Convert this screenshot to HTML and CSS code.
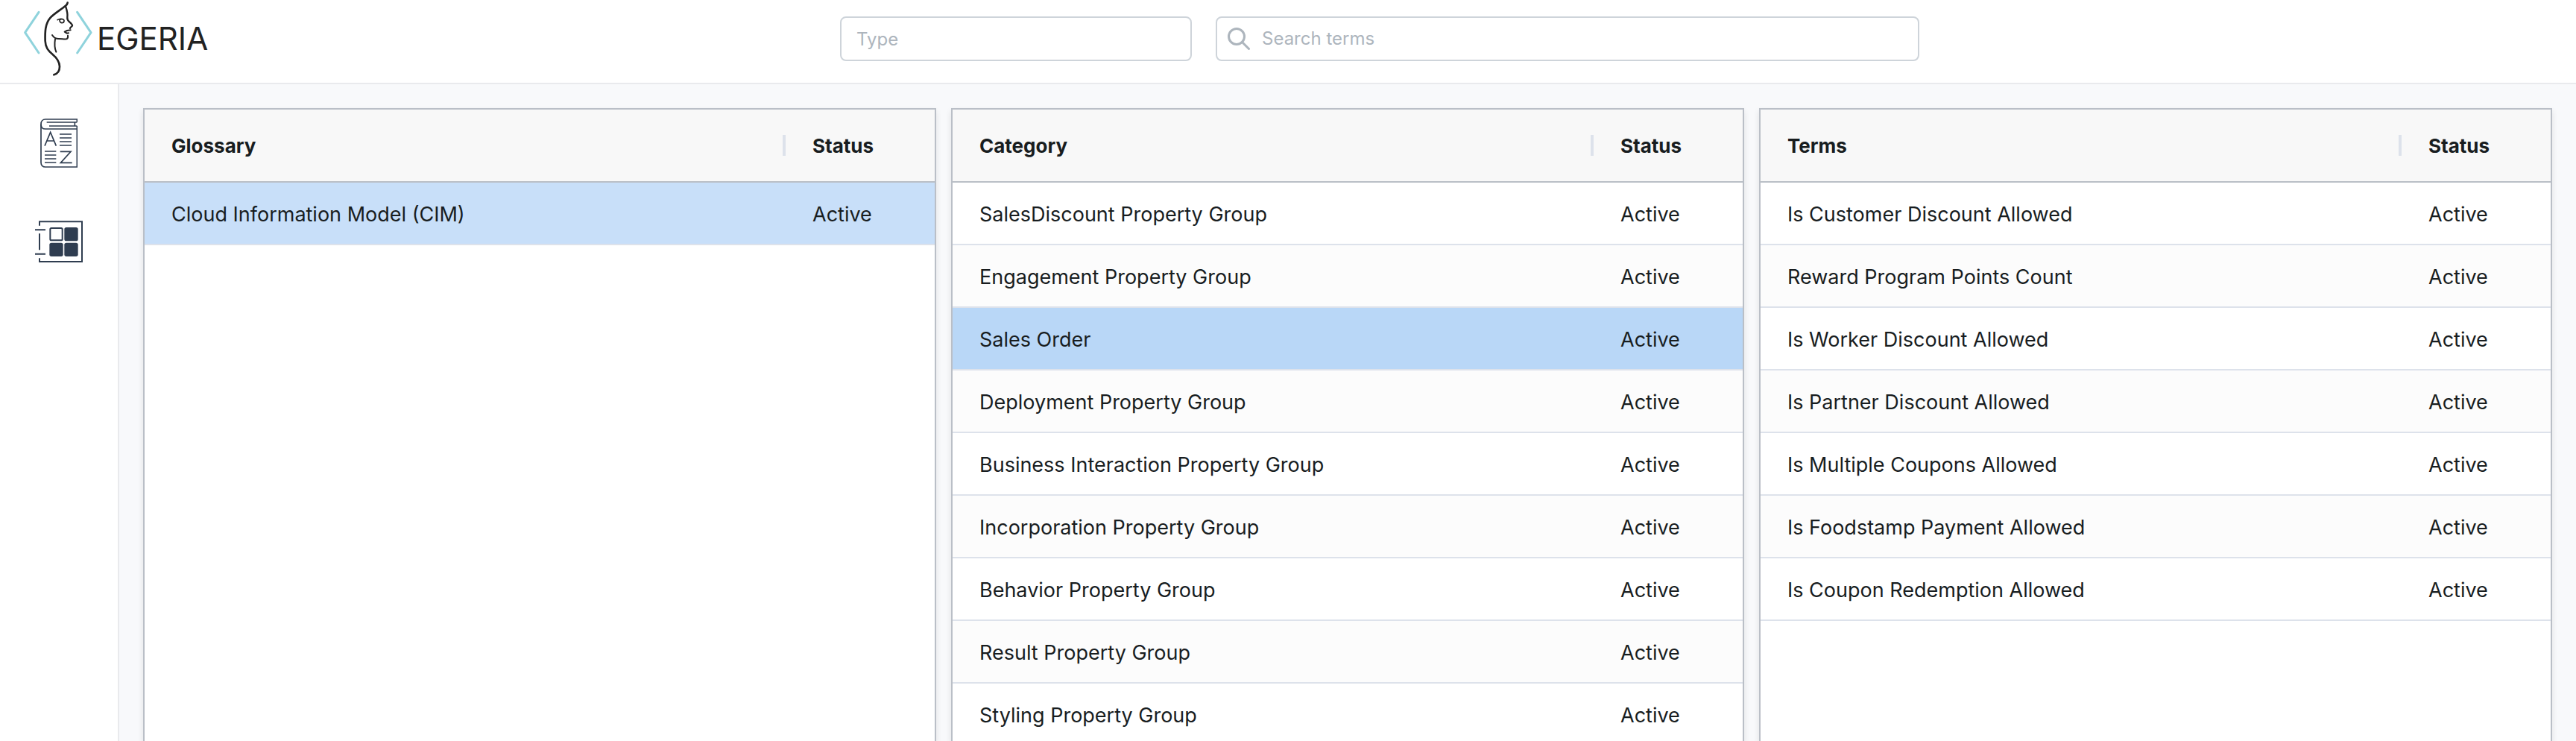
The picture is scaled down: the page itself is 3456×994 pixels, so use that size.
FILE: index.html
```html
<!DOCTYPE html>
<html lang="en">
<head>
<meta charset="utf-8">
<title>Egeria</title>
<link rel="stylesheet" href="styles.css">
</head>
<body>
<header class="topbar">
  <a class="logo" href="#" aria-label="Egeria">
    <svg class="logo-mark" viewBox="96 6 276 300" fill="none" stroke-linecap="round" stroke-linejoin="round" aria-hidden="true">
      <path stroke="#8fd3dc" stroke-width="9" d="M156 49 101 131l55 82M311 49l55 82-55 82"/>
      <g stroke="#222" stroke-width="8">
        <path d="M272 11c-1 6-4 9-9 13-18 15-45 31-60 47-22 24-22 60-21 94 1 26 12 39 29 53 18 15 29 29 29 50 0 16-8 29-23 33"/>
        <path stroke-width="7" d="M264 25c6 18 9 32 7 44-1 9 1 13 7 18 7 6 13 11 13 16-1 5-9 6-9 11"/>
        <path stroke-width="6" d="M284 121l-14 2-10 5 9 6 7-1M273 143c1 6 0 12-5 14-9 1-20-1-32-1-13 0-20-5-26-15M222 157c-3 18-3 35 4 52"/>
        <path stroke-width="5" d="M231 80c9-5 17-6 25-1M240 83c1 6 4 9 9 9 6 0 9-4 9-9-1-4-4-6-9-6-5-1-9 2-9 6"/>
      </g>
    </svg>
    <span class="logo-name">EGERIA</span>
  </a>
  <input class="field" type="text" placeholder="Type" aria-label="Type">
  <label class="field search">
    <svg class="search-icon" viewBox="0 0 30 30" fill="none" stroke="#adb5bd" stroke-width="3" stroke-linecap="round" aria-hidden="true"><circle cx="12" cy="12" r="10.5"/><path d="M19.5 19.5 28.5 28.5"/></svg>
    <input class="search-input" type="text" placeholder="Search terms" aria-label="Search terms">
  </label>
</header>
<div class="body">
  <nav class="sidebar">
    <a href="#" aria-label="Glossary">
      <svg class="icon-book" viewBox="72 57 150 198" fill="none" stroke="#2f3d50" stroke-width="5" aria-hidden="true">
        <path d="M220 71V60H93c-11 0-18 8-18 20v154c0 11 7 18 17 18h128V87"/>
        <path d="M75 80c0 12 7 19 18 19h127M220 72H98M220 87H108M211 72v15"/>
        <path d="M90 167 113 112l23 55M98 147h30M150 120h48M150 135h48M150 150h48M150 165h48M90 189h46M90 204h46M90 219h46M90 234h46M152 190h43l-41 45h46"/>
      </svg>
    </a>
    <a href="#" aria-label="Asset catalog">
      <svg class="icon-grid" viewBox="50 467 192 168" fill="none" stroke="#2f3d50" stroke-width="6" aria-hidden="true">
        <path d="M68 487V471h171v161H68V618M68 519v66M50 504h42M50 601h42"/>
        <rect x="111" y="497" width="49" height="49" rx="5"/>
        <g fill="#2f3d50" stroke="none"><rect x="168" y="494" width="55" height="55" rx="8"/><rect x="108" y="556" width="55" height="55" rx="8"/><rect x="168" y="556" width="55" height="55" rx="8"/></g>
      </svg>
    </a>
  </nav>
  <main class="panels">
    <section class="panel">
      <table class="grid">
        <thead><tr><th class="name">Glossary</th><th class="status">Status</th></tr></thead>
        <tbody>
          <tr class="hovered"><td>Cloud Information Model (CIM)</td><td>Active</td></tr>
        </tbody>
      </table>
    </section>
    <section class="panel">
      <table class="grid">
        <thead><tr><th class="name">Category</th><th class="status">Status</th></tr></thead>
        <tbody>
          <tr><td>SalesDiscount Property Group</td><td>Active</td></tr>
          <tr><td>Engagement Property Group</td><td>Active</td></tr>
          <tr class="selected"><td>Sales Order</td><td>Active</td></tr>
          <tr><td>Deployment Property Group</td><td>Active</td></tr>
          <tr><td>Business Interaction Property Group</td><td>Active</td></tr>
          <tr><td>Incorporation Property Group</td><td>Active</td></tr>
          <tr><td>Behavior Property Group</td><td>Active</td></tr>
          <tr><td>Result Property Group</td><td>Active</td></tr>
          <tr><td>Styling Property Group</td><td>Active</td></tr>
        </tbody>
      </table>
    </section>
    <section class="panel">
      <table class="grid">
        <thead><tr><th class="name">Terms</th><th class="status">Status</th></tr></thead>
        <tbody>
          <tr><td>Is Customer Discount Allowed</td><td>Active</td></tr>
          <tr><td>Reward Program Points Count</td><td>Active</td></tr>
          <tr><td>Is Worker Discount Allowed</td><td>Active</td></tr>
          <tr><td>Is Partner Discount Allowed</td><td>Active</td></tr>
          <tr><td>Is Multiple Coupons Allowed</td><td>Active</td></tr>
          <tr><td>Is Foodstamp Payment Allowed</td><td>Active</td></tr>
          <tr><td>Is Coupon Redemption Allowed</td><td>Active</td></tr>
        </tbody>
      </table>
    </section>
  </main>
</div>
</body>
</html>
```
FILE: styles.css
```css
* { box-sizing: border-box; }

body {
  margin: 0;
  height: 100vh;
  display: flex;
  flex-direction: column;
  overflow: hidden;
  background: #f8f9fb;
  color: #181d1f;
  font-family: Inter, "Liberation Sans", sans-serif;
  font-size: 27px;
}

.topbar {
  display: grid;
  grid-template-columns: 1095fr 472fr 944fr 849fr;
  column-gap: 32px;
  align-items: center;
  padding-bottom: 7px;
  background: #fff;
  border-bottom: 2px solid #e9eaed;
}

.logo {
  display: flex;
  align-items: center;
  gap: 6px;
  padding: 2px 0 2px 32px;
  color: #222;
  text-decoration: none;
}
.logo-mark { width: 92px; height: 100px; }
.logo-name { font: 42px/48px Inter, sans-serif; }

.field {
  width: 100%;
  height: 60px;
  padding: 0 20px;
  background: #fff;
  border: 2px solid #ced4da;
  border-radius: 8px;
  font: 24px/32px Inter, "Liberation Sans", sans-serif;
}
.search {
  display: flex;
  align-items: center;
  gap: 16px;
  padding: 0 14px;
}
.search-icon { width: 30px; height: 30px; flex: none; }
.search-input {
  flex: 1;
  min-width: 0;
  padding: 0;
  border: 0;
  outline: 0;
  background: none;
  font: inherit;
}
input::placeholder { color: #adb5bd; opacity: 1; }

.body { flex: 1; display: flex; min-height: 0; }

.sidebar {
  flex: none;
  width: 160px;
  display: flex;
  flex-direction: column;
  align-items: center;
  gap: 71px;
  padding-top: 46px;
  background: #fff;
  border-right: 2px solid #e9eaed;
}
.sidebar svg { display: block; }
.icon-book { width: 50px; height: 66px; }
.icon-grid { width: 64px; height: 56px; }

.panels {
  flex: 1;
  display: grid;
  grid-template-columns: repeat(3, 1fr);
  gap: 20px;
  padding: 32px 32px 0;
  min-height: 0;
}
.panel {
  min-height: 0;
  overflow: hidden;
  background: #fff;
  border: 2px solid #babfc7;
  border-bottom: 0;
  box-shadow: 0 4px 8px rgba(0, 0, 0, 0.1);
}

.grid {
  width: 100%;
  table-layout: fixed;
  border-collapse: separate;
  border-spacing: 0;
}
.grid th {
  height: 98px;
  padding: 0 36px;
  background: #f8f8f8;
  border-bottom: 2px solid #babfc7;
  font-size: 26px;
  font-weight: 700;
  text-align: left;
}
.grid .name {
  background: #f8f8f8 linear-gradient(#dde2eb, #dde2eb) right center / 4px 28px no-repeat;
}
.grid .status { width: 200px; }
.grid td {
  height: 84px;
  padding: 2px 36px 0;
  border-bottom: 2px solid #dde2eb;
  white-space: nowrap;
}
.grid tbody tr:nth-child(even) { background: #fcfcfc; }
.grid tbody .hovered { background: #c8dff9; }
.grid tbody .selected { background: #b9d7f7; }
```
